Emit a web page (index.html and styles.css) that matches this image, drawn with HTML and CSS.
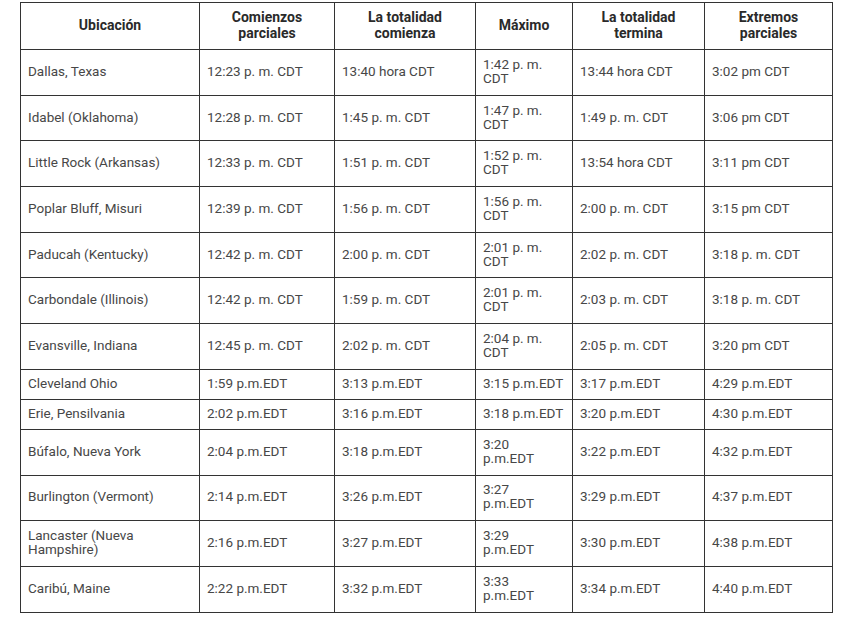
FILE: index.html
```html
<!DOCTYPE html>
<html lang="es">
<head>
<meta charset="utf-8">
<title>Eclipse</title>
<link rel="stylesheet" href="styles.css">
</head>
<body>
<div class="wrap">
<table class="eclipse">
<colgroup>
<col class="c1"><col class="c2"><col class="c3"><col class="c4"><col class="c5"><col class="c6">
</colgroup>
<thead>
<tr class="hd">
<th>Ubicación</th>
<th>Comienzos<br>parciales</th>
<th>La totalidad<br>comienza</th>
<th>Máximo</th>
<th>La totalidad<br>termina</th>
<th>Extremos<br>parciales</th>
</tr>
</thead>
<tbody>
<tr class="tall"><td>Dallas, Texas</td><td>12:23 p. m. CDT</td><td>13:40 hora CDT</td><td class="two">1:42 p. m.<br>CDT</td><td>13:44 hora CDT</td><td>3:02 pm CDT</td></tr>
<tr class="tall"><td>Idabel (Oklahoma)</td><td>12:28 p. m. CDT</td><td>1:45 p. m. CDT</td><td class="two">1:47 p. m.<br>CDT</td><td>1:49 p. m. CDT</td><td>3:06 pm CDT</td></tr>
<tr class="tall"><td>Little Rock (Arkansas)</td><td>12:33 p. m. CDT</td><td>1:51 p. m. CDT</td><td class="two">1:52 p. m.<br>CDT</td><td>13:54 hora CDT</td><td>3:11 pm CDT</td></tr>
<tr class="tall"><td>Poplar Bluff, Misuri</td><td>12:39 p. m. CDT</td><td>1:56 p. m. CDT</td><td class="two">1:56 p. m.<br>CDT</td><td>2:00 p. m. CDT</td><td>3:15 pm CDT</td></tr>
<tr class="tall"><td>Paducah (Kentucky)</td><td>12:42 p. m. CDT</td><td>2:00 p. m. CDT</td><td class="two">2:01 p. m.<br>CDT</td><td>2:02 p. m. CDT</td><td>3:18 p. m. CDT</td></tr>
<tr class="tall"><td>Carbondale (Illinois)</td><td>12:42 p. m. CDT</td><td>1:59 p. m. CDT</td><td class="two">2:01 p. m.<br>CDT</td><td>2:03 p. m. CDT</td><td>3:18 p. m. CDT</td></tr>
<tr class="tall"><td>Evansville, Indiana</td><td>12:45 p. m. CDT</td><td>2:02 p. m. CDT</td><td class="two">2:04 p. m.<br>CDT</td><td>2:05 p. m. CDT</td><td>3:20 pm CDT</td></tr>
<tr class="short"><td>Cleveland Ohio</td><td>1:59 p.m.EDT</td><td>3:13 p.m.EDT</td><td>3:15 p.m.EDT</td><td>3:17 p.m.EDT</td><td>4:29 p.m.EDT</td></tr>
<tr class="short"><td>Erie, Pensilvania</td><td>2:02 p.m.EDT</td><td>3:16 p.m.EDT</td><td>3:18 p.m.EDT</td><td>3:20 p.m.EDT</td><td>4:30 p.m.EDT</td></tr>
<tr class="tall"><td>Búfalo, Nueva York</td><td>2:04 p.m.EDT</td><td>3:18 p.m.EDT</td><td class="two">3:20<br>p.m.EDT</td><td>3:22 p.m.EDT</td><td>4:32 p.m.EDT</td></tr>
<tr class="tall"><td>Burlington (Vermont)</td><td>2:14 p.m.EDT</td><td>3:26 p.m.EDT</td><td class="two">3:27<br>p.m.EDT</td><td>3:29 p.m.EDT</td><td>4:37 p.m.EDT</td></tr>
<tr class="tall"><td class="two">Lancaster (Nueva<br>Hampshire)</td><td>2:16 p.m.EDT</td><td>3:27 p.m.EDT</td><td class="two">3:29<br>p.m.EDT</td><td>3:30 p.m.EDT</td><td>4:38 p.m.EDT</td></tr>
<tr class="tall"><td>Caribú, Maine</td><td>2:22 p.m.EDT</td><td>3:32 p.m.EDT</td><td class="two">3:33<br>p.m.EDT</td><td>3:34 p.m.EDT</td><td>4:40 p.m.EDT</td></tr>
</tbody>
</table>
</div>
</body>
</html>
```
FILE: styles.css
```css
html, body {
  margin: 0;
  padding: 0;
  background: #ffffff;
}
.wrap {
  padding: 2px 0 0 20px;
}
.eclipse {
  border-collapse: collapse;
  table-layout: fixed;
  width: 812px;
  font-family: Roboto, "Liberation Sans", sans-serif;
  font-size: 13.5px;
  color: #474747;
}
.c1 { width: 179px; }
.c2 { width: 135px; }
.c3 { width: 141px; }
.c4 { width: 97px; }
.c5 { width: 132px; }
.c6 { width: 128px; }
.eclipse th,
.eclipse td {
  border: 1px solid #333333;
  padding: 0 7px 3px;
  vertical-align: middle;
  text-align: left;
  line-height: 16px;
  white-space: nowrap;
}
.eclipse th {
  text-align: center;
  font-weight: bold;
  font-size: 14px;
  color: #2a2a2a;
  line-height: 16px;
}
.hd { height: 47px; }
.tall { height: 45.7px; }
.short { height: 30px; }
.eclipse td.two {
  line-height: 14px;
}
```
